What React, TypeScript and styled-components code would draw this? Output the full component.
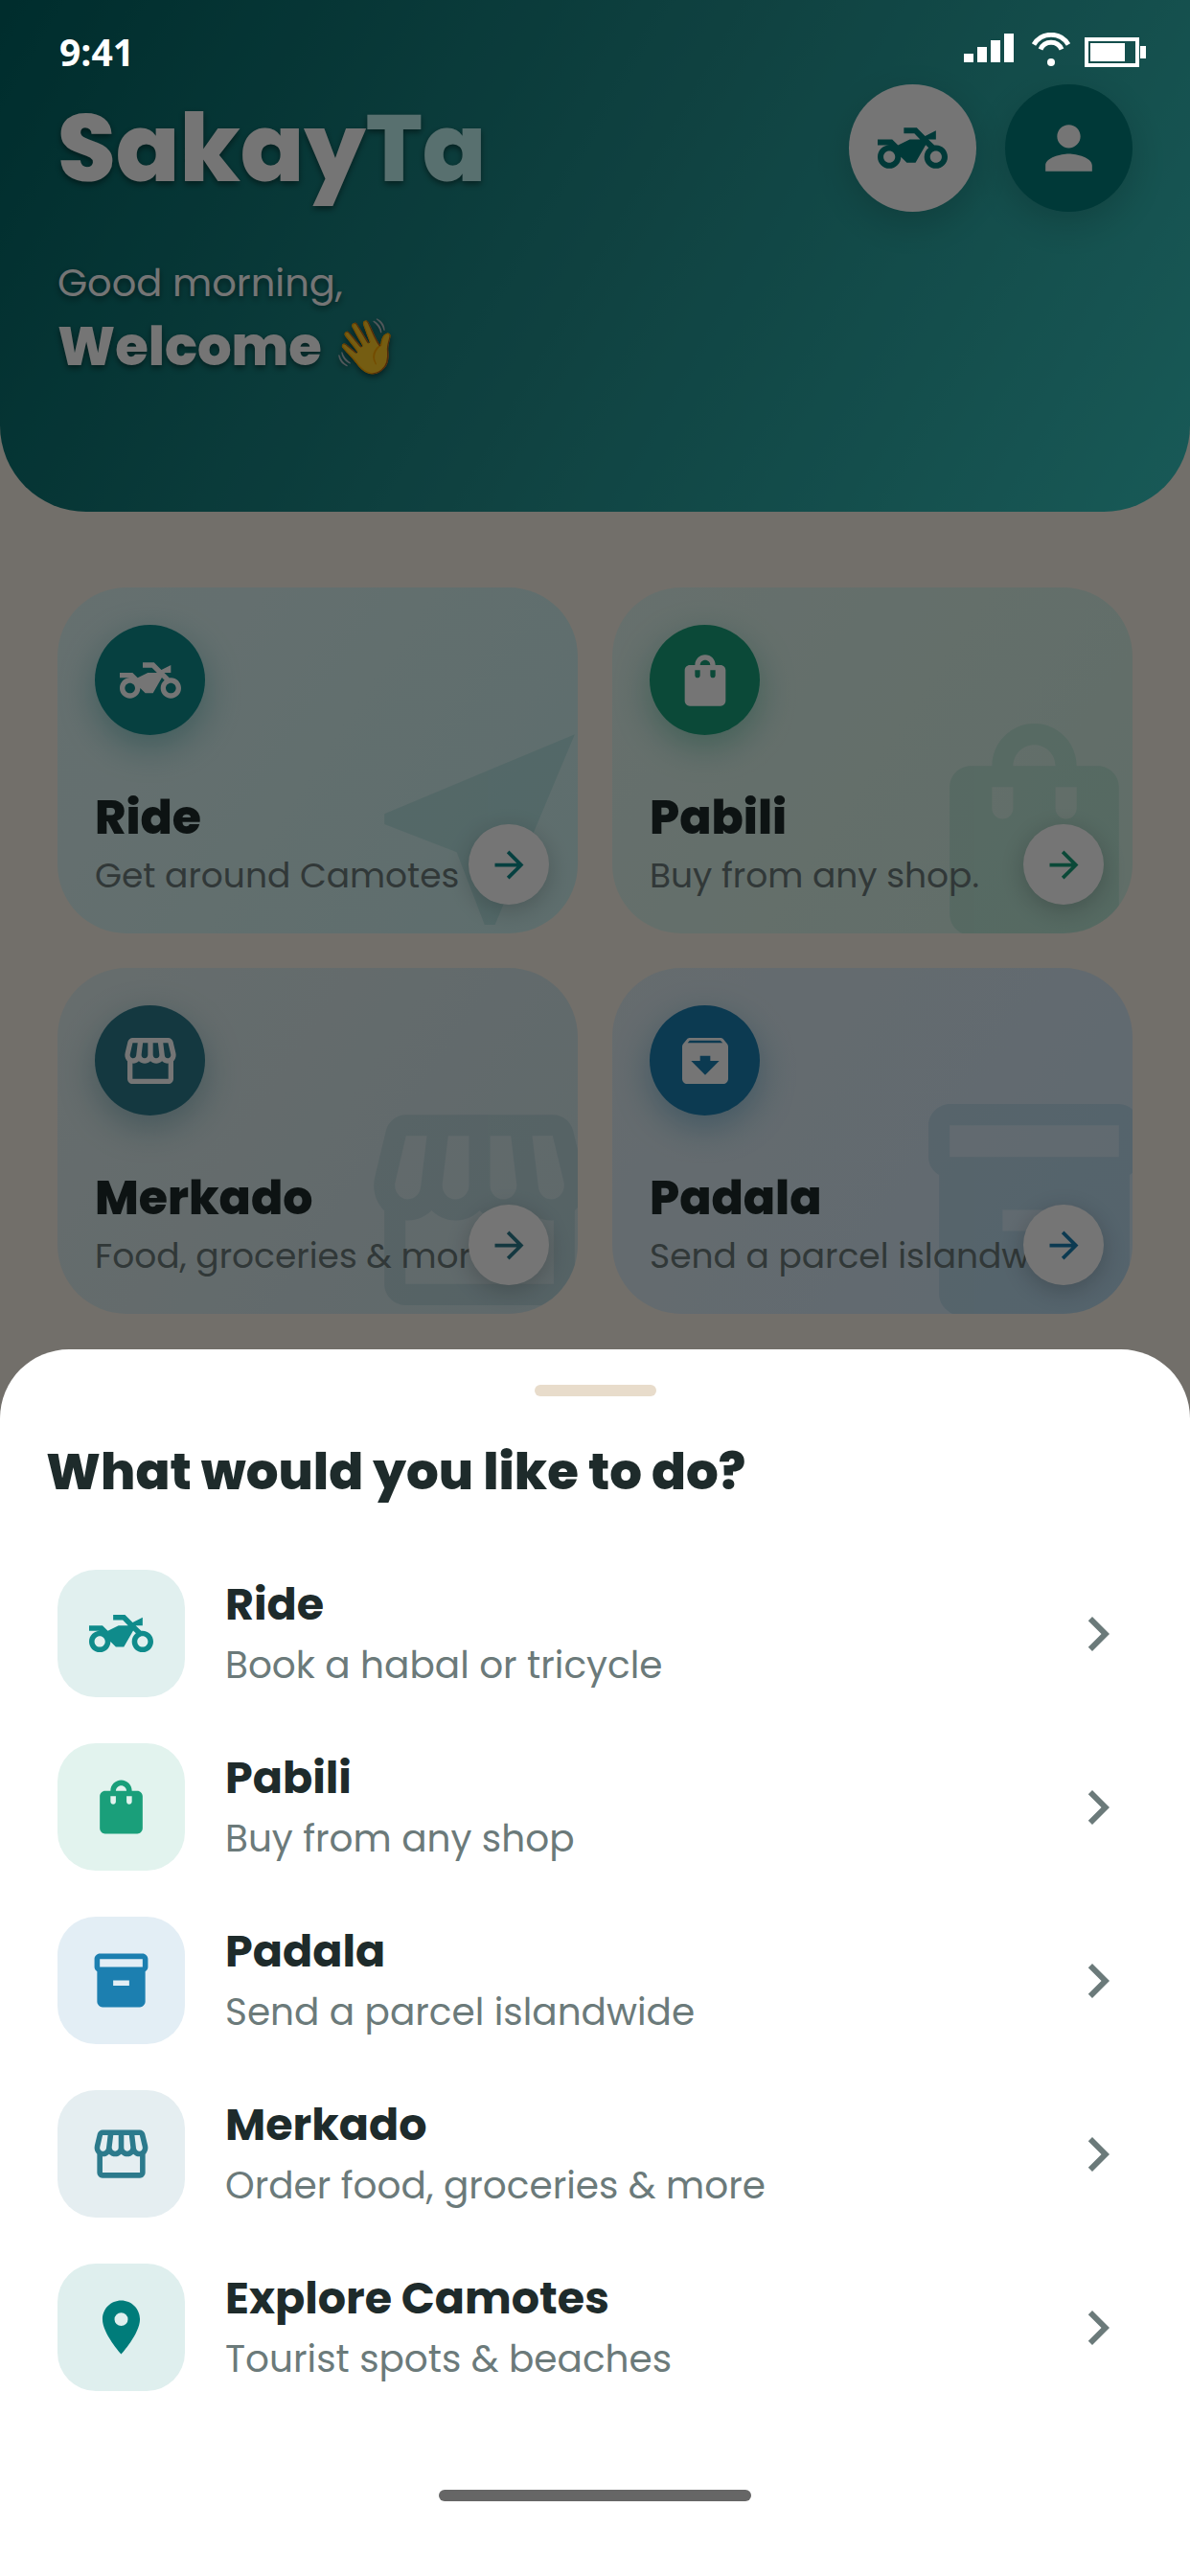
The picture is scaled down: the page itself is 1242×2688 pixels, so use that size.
import React from "react";
import styled, { createGlobalStyle } from "styled-components";
import type { IconType } from "react-icons";
import {
  MdArchive,
  MdArrowForward,
  MdChevronRight,
  MdInventory2,
  MdLocationOn,
  MdNearMe,
  MdPerson,
  MdShoppingBag,
  MdStorefront,
  MdTwoWheeler,
} from "react-icons/md";

const GlobalStyle = createGlobalStyle`
  *, *::before, *::after { box-sizing: border-box; }
  body {
    margin: 0;
    background: #f8f1e6;
    font-family: Poppins, Inter, "Open Sans", sans-serif;
    color: #1e2b2b;
  }
  h1, h2, h3, p, ul { margin: 0; padding: 0; }
  button { font: inherit; color: inherit; border: 0; padding: 0; background: none; text-align: left; cursor: pointer; }
  svg { display: block; flex: none; }
`;

const Screen = styled.div`
  position: relative;
  min-height: 100vh;
  overflow: hidden;
`;

/* Status bar */
const StatusBar = styled.div`
  position: absolute;
  inset: 0 0 auto 0;
  z-index: 3;
  display: flex;
  align-items: center;
  justify-content: space-between;
  height: 108px;
  padding: 0 46px 0 62px;
  color: #fff;
`;

const Clock = styled.span`
  font-family: "Open Sans", "Noto Sans", sans-serif;
  font-size: 39px;
  font-weight: 700;
  line-height: 44px;
`;

/* Home page */
const Header = styled.header`
  height: 534px;
  padding: 88px 60px 0;
  border-radius: 0 0 90px 90px;
  background: linear-gradient(120deg, #006262 0%, #228f8d 50%, #36c4be 100%);
`;

const HeaderTop = styled.div`
  display: flex;
  align-items: center;
  gap: 30px;
`;

const Brand = styled.h1`
  flex: 1;
  font-size: 98px;
  line-height: 130px;
  font-weight: 800;
  color: #fff;
  text-shadow: 0 3px 6px rgba(0, 0, 0, 0.45);
`;

const BrandAccent = styled.span`
  color: #bff3f1;
`;

const RoundButton = styled.button<{ $bg: string; $fg: string }>`
  display: grid;
  place-items: center;
  width: 133px;
  height: 133px;
  border-radius: 50%;
  background: ${(p) => p.$bg};
  color: ${(p) => p.$fg};
  box-shadow: 0 12px 36px rgba(0, 0, 0, 0.16);
`;

const Greeting = styled.p`
  margin-top: 44px;
  font-size: 40px;
  line-height: 60px;
  color: #fff;
  text-shadow: 0 3px 6px rgba(0, 0, 0, 0.45);
`;

const Welcome = styled.h2`
  font-size: 56px;
  line-height: 74px;
  font-weight: 800;
  color: #fff;
  text-shadow: 0 3px 6px rgba(0, 0, 0, 0.45);
`;

const CardGrid = styled.main`
  display: grid;
  grid-template-columns: 1fr 1fr;
  gap: 36px;
  padding: 79px 60px 60px;
`;

const Card = styled.button<{ $from: string; $to: string }>`
  position: relative;
  overflow: hidden;
  display: flex;
  flex-direction: column;
  align-items: flex-start;
  height: 361px;
  padding: 39px 39px 30px;
  border-radius: 72px;
  background: linear-gradient(124deg, ${(p) => p.$from}, ${(p) => p.$to});
`;

const CardBadge = styled.span<{ $color: string }>`
  flex: none;
  display: grid;
  place-items: center;
  width: 115px;
  height: 115px;
  margin-bottom: 54px;
  border-radius: 50%;
  background: ${(p) => p.$color};
  color: #fff;
  box-shadow: 0 12px 36px ${(p) => p.$color}66;
`;

const CardTitle = styled.span`
  position: relative;
  font-size: 49px;
  line-height: 64px;
  font-weight: 800;
`;

const CardText = styled.span`
  position: relative;
  font-size: 36px;
  line-height: 58px;
  color: #6b7a7a;
  white-space: nowrap;
`;

const Watermark = styled.span<{ $color: string }>`
  position: absolute;
  right: -30px;
  bottom: -24px;
  color: ${(p) => p.$color};
  opacity: 0.13;
`;

const GoCircle = styled.span<{ $color: string }>`
  position: absolute;
  right: 30px;
  bottom: 30px;
  display: grid;
  place-items: center;
  width: 84px;
  height: 84px;
  border-radius: 50%;
  background: #fff;
  color: ${(p) => p.$color};
  box-shadow: 0 6px 24px rgba(0, 0, 0, 0.2);
`;

const Scrim = styled.div`
  position: absolute;
  inset: 0;
  z-index: 1;
  background: rgba(0, 0, 0, 0.54);
`;

/* Bottom sheet */
const Sheet = styled.section`
  position: absolute;
  inset: auto 0 0 0;
  z-index: 2;
  display: flex;
  flex-direction: column;
  padding: 37px 48px 78px;
  border-radius: 72px 72px 0 0;
  background: #fff;
`;

const Grabber = styled.div`
  align-self: center;
  width: 127px;
  height: 12px;
  border-radius: 6px;
  background: #e8dccb;
`;

const SheetTitle = styled.h2`
  margin: 44px 0 67px;
  font-size: 53px;
  line-height: 70px;
  font-weight: 800;
`;

const ActionList = styled.ul`
  display: flex;
  flex-direction: column;
  gap: 48px;
  padding: 0 12px;
  list-style: none;
`;

const ActionRow = styled.button`
  display: flex;
  align-items: center;
  gap: 42px;
  width: 100%;
`;

const ActionTile = styled.span<{ $bg: string; $fg: string }>`
  display: grid;
  place-items: center;
  width: 133px;
  height: 133px;
  border-radius: 40px;
  background: ${(p) => p.$bg};
  color: ${(p) => p.$fg};
`;

const ActionCopy = styled.span`
  flex: 1;
  display: flex;
  flex-direction: column;
`;

const ActionTitle = styled.span`
  font-size: 46px;
  line-height: 66px;
  font-weight: 700;
`;

const ActionText = styled.span`
  font-size: 39px;
  line-height: 62px;
  color: #6b7a7a;
`;

const HomeIndicator = styled.div`
  align-self: center;
  width: 326px;
  height: 12px;
  margin-top: 103px;
  border-radius: 6px;
  background: #666;
`;

type Service = {
  title: string;
  text: string;
  color: string;
  from: string;
  to: string;
  icon: IconType;
  watermark: IconType;
};

const services: Service[] = [
  { title: "Ride", text: "Get around Camotes", color: "#0f8b8b", from: "#def3f2", to: "#ccefee", icon: MdTwoWheeler, watermark: MdNearMe },
  { title: "Pabili", text: "Buy from any shop.", color: "#1a9f7a", from: "#e0f3ee", to: "#d2efe2", icon: MdShoppingBag, watermark: MdShoppingBag },
  { title: "Merkado", text: "Food, groceries & more", color: "#2c7a8c", from: "#e0eeee", to: "#cfe4e9", icon: MdStorefront, watermark: MdStorefront },
  { title: "Padala", text: "Send a parcel islandwide", color: "#1c7fb0", from: "#deebf0", to: "#d0e6f5", icon: MdArchive, watermark: MdInventory2 },
];

type Action = { title: string; text: string; fg: string; bg: string; icon: IconType };

const actions: Action[] = [
  { title: "Ride", text: "Book a habal or tricycle", fg: "#0f8b8b", bg: "#e1f0ef", icon: MdTwoWheeler },
  { title: "Pabili", text: "Buy from any shop", fg: "#1a9f7a", bg: "#e2f3ee", icon: MdShoppingBag },
  { title: "Padala", text: "Send a parcel islandwide", fg: "#1c7fb0", bg: "#e3eef5", icon: MdInventory2 },
  { title: "Merkado", text: "Order food, groceries & more", fg: "#2c7a8c", bg: "#e5eef1", icon: MdStorefront },
  { title: "Explore Camotes", text: "Tourist spots & beaches", fg: "#007c7a", bg: "#dfefee", icon: MdLocationOn },
];

const StatusIcons = () => (
  <svg width="190" height="40" viewBox="0 0 190 40" fill="#fff" role="img" aria-label="Signal, Wi-Fi and battery">
    <rect x="0" y="22" width="10" height="9" />
    <rect x="14" y="15" width="10" height="16" />
    <rect x="28" y="8" width="10" height="23" />
    <rect x="42" y="1" width="10" height="30" />
    <g fill="none" stroke="#fff" strokeWidth="5">
      <path d="M73 12.500a21 21 0 0 1 36 0" />
      <path d="M80 17.500a12 12 0 0 1 22 0" />
    </g>
    <circle cx="91" cy="31" r="4" />
    <rect x="128" y="7" width="53" height="27" fill="none" stroke="#fff" strokeWidth="4" />
    <rect x="132" y="11" width="36" height="19" />
    <rect x="184" y="14" width="6" height="13" />
  </svg>
);

export default function App() {
  return (
    <>
      <GlobalStyle />
      <Screen>
        <StatusBar>
          <Clock>9:41</Clock>
          <StatusIcons />
        </StatusBar>

        <Header>
          <HeaderTop>
            <Brand>
              Sakay<BrandAccent>Ta</BrandAccent>
            </Brand>
            <RoundButton $bg="#fff" $fg="#007c7a" aria-label="My rides">
              <MdTwoWheeler size={73} />
            </RoundButton>
            <RoundButton $bg="#007c7a" $fg="#fff" aria-label="Profile">
              <MdPerson size={73} />
            </RoundButton>
          </HeaderTop>
          <Greeting>Good morning,</Greeting>
          <Welcome>Welcome 👋</Welcome>
        </Header>

        <CardGrid>
          {services.map(({ title, text, color, from, to, icon: Icon, watermark: Mark }) => (
            <Card key={title} $from={from} $to={to}>
              <Watermark $color={color}>
                <Mark size={265} />
              </Watermark>
              <CardBadge $color={color}>
                <Icon size={64} />
              </CardBadge>
              <CardTitle>{title}</CardTitle>
              <CardText>{text}</CardText>
              <GoCircle $color={color}>
                <MdArrowForward size={45} />
              </GoCircle>
            </Card>
          ))}
        </CardGrid>

        <Scrim />

        <Sheet role="dialog" aria-labelledby="sheet-title">
          <Grabber />
          <SheetTitle id="sheet-title">What would you like to do?</SheetTitle>
          <ActionList>
            {actions.map(({ title, text, fg, bg, icon: Icon }) => (
              <li key={title}>
                <ActionRow>
                  <ActionTile $bg={bg} $fg={fg}>
                    <Icon size={67} />
                  </ActionTile>
                  <ActionCopy>
                    <ActionTitle>{title}</ActionTitle>
                    <ActionText>{text}</ActionText>
                  </ActionCopy>
                  <MdChevronRight size={72} color="#6b7a7a" />
                </ActionRow>
              </li>
            ))}
          </ActionList>
          <HomeIndicator />
        </Sheet>
      </Screen>
    </>
  );
}
